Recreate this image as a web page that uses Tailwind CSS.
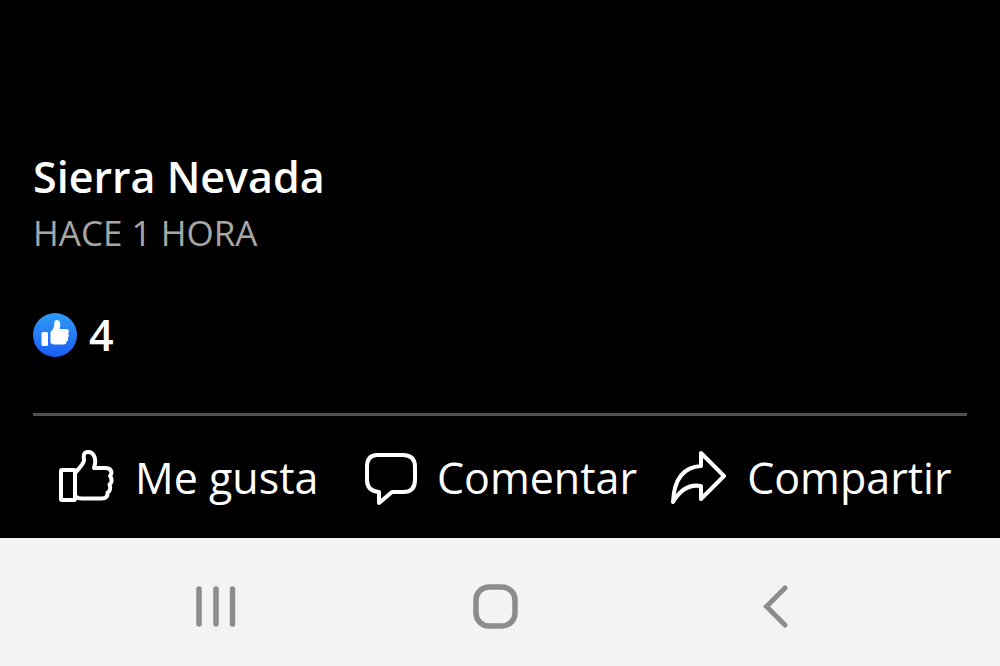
<!DOCTYPE html>
<html lang="es">
<head>
    <meta charset="UTF-8">
    <meta name="viewport" content="width=device-width, initial-scale=1.0">
    <title>Sierra Nevada</title>
    <script src="https://cdn.jsdelivr.net/npm/@tailwindcss/browser@4"></script>
</head>
<body class="flex min-h-screen flex-col bg-black font-['Open_Sans',sans-serif] text-white">
    <main class="flex flex-1 flex-col justify-end px-[33px]">
        <!-- Post info -->
        <h1 class="text-[43px] leading-14 font-semibold">Sierra Nevada</h1>
        <p class="text-[35px] leading-14 text-[#a6a6a6]">HACE 1 HORA</p>

        <!-- Reactions -->
        <div class="mt-[52px] flex h-11 items-center gap-3">
            <svg class="size-11" viewBox="0 0 44 44" role="img" aria-label="Me gusta">
                <defs>
                    <linearGradient id="like" x1="0" y1="0" x2="0" y2="1">
                        <stop offset="0" stop-color="#2f9bf8"/>
                        <stop offset="1" stop-color="#1b5cf3"/>
                    </linearGradient>
                </defs>
                <circle cx="22" cy="22" r="22" fill="url(#like)"/>
                <rect x="8.500" y="19" width="6.500" height="14" rx="1.500" fill="#fff"/>
                <path d="M17.500 19C20 17 21.500 14 21.300 9.500C21.200 6.300 26 6 27 9.500C27.500 12 27 14 26.500 16H33.500C36.200 16 36.500 19 35 20.500C36.300 22 36 24 34.700 24.700C35.500 26.200 35 28 33.500 28.500C33.800 30.500 32.500 31.500 30.500 31.500H23C20.500 31.500 19 31 17.500 30Z" fill="#fff"/>
            </svg>
            <span class="text-[43px] leading-11 font-semibold">4</span>
        </div>

        <!-- Actions -->
        <div class="mt-14 grid grid-cols-3 border-t-3 border-[#505050] pt-[34px] pb-8">
            <button type="button" class="flex items-center justify-center gap-5">
                <svg class="h-14 w-14 shrink-0" viewBox="0 0 56 56" fill="none" stroke="currentColor" stroke-width="4" stroke-linejoin="round" stroke-linecap="round">
                    <rect x="2" y="20" width="14" height="30" rx="1"/>
                    <path d="M17 22C20 18 25 14 25 10C24 5 25 2 29 2C35 2 38 9 35 18H46C53 18 53.500 23 51 26C53.500 29 53 33 50.500 34.500C52 38 51 41.500 48.500 42.500C49 46 47 48.500 43 48.500H23C20 48.500 18 48 17 46.500"/>
                </svg>
                <span class="text-[43px] leading-14">Me gusta</span>
            </button>
            <button type="button" class="flex items-center justify-center gap-5">
                <svg class="h-14 w-[54px] shrink-0" viewBox="0 0 54 56" fill="none" stroke="currentColor" stroke-width="4" stroke-linejoin="round">
                    <path d="M14 5H40Q52 5 52 17V30Q52 42 40 42H29L16 53V42Q4 41 4 30V17Q4 5 14 5Z"/>
                </svg>
                <span class="text-[43px] leading-14">Comentar</span>
            </button>
            <button type="button" class="flex items-center justify-center gap-5">
                <svg class="h-14 w-14 shrink-0" viewBox="0 0 56 56" fill="none" stroke="currentColor" stroke-width="4" stroke-linejoin="round">
                    <path d="M30 3L53 26L30 49V36C18 34 9 40 2 52C3 30 12 17 30 16Z"/>
                </svg>
                <span class="text-[43px] leading-14">Compartir</span>
            </button>
        </div>
    </main>

    <!-- System navigation -->
    <nav class="grid h-32 grid-cols-3 bg-[#f3f3f3] pr-[84px] pl-[76px] text-[#8c8c8c]">
        <button type="button" class="flex items-center justify-center pt-2" aria-label="Recientes">
            <svg class="size-11" viewBox="0 0 44 44" fill="none" stroke="currentColor" stroke-width="5.500" stroke-linecap="round">
                <path d="M5 5V40M22 5V40M38.500 5V40"/>
            </svg>
        </button>
        <button type="button" class="flex items-center justify-center pt-2" aria-label="Inicio">
            <svg class="size-12" viewBox="0 0 48 48" fill="none" stroke="currentColor" stroke-width="5.500">
                <rect x="4" y="5" width="39" height="39" rx="13"/>
            </svg>
        </button>
        <button type="button" class="flex items-center justify-center pt-2" aria-label="Atrás">
            <svg class="h-11 w-7" viewBox="0 0 28 44" fill="none" stroke="currentColor" stroke-width="5" stroke-linecap="round">
                <path d="M23 4L4.500 22.500L23 41"/>
            </svg>
        </button>
    </nav>
</body>
</html>
